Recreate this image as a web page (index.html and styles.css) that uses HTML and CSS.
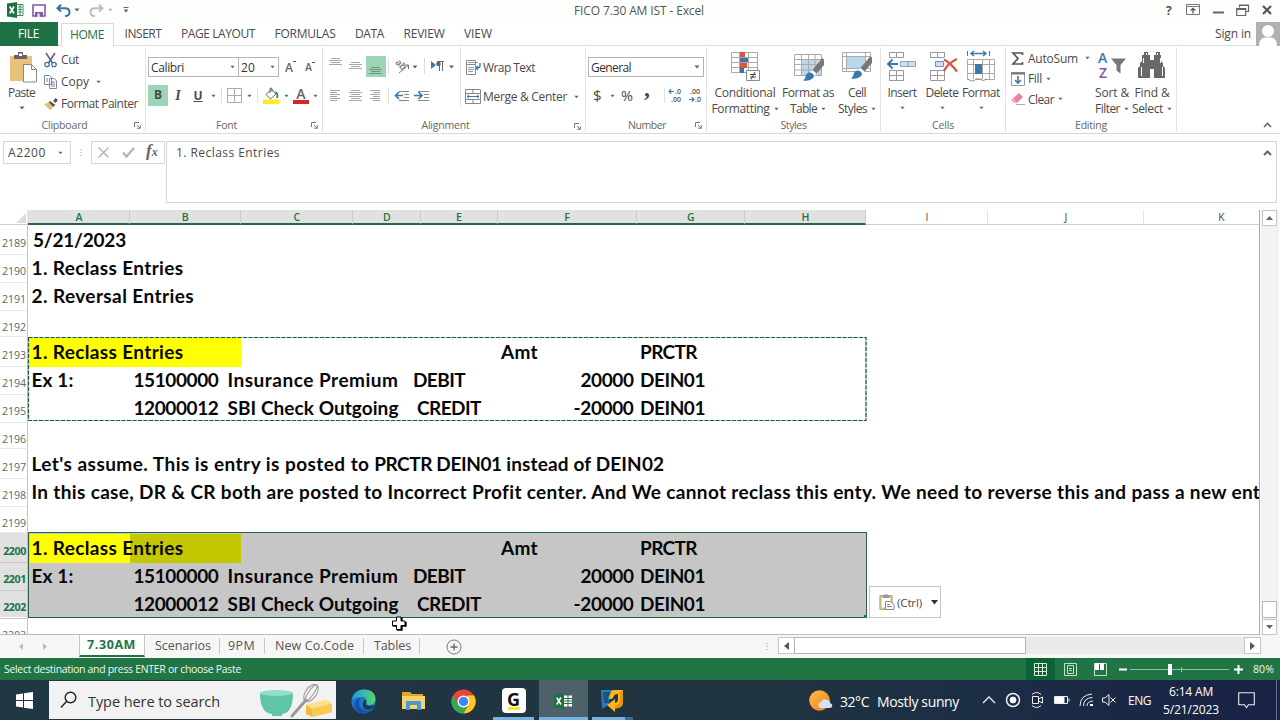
FILE: index.html
```html
<!DOCTYPE html>
<html lang="en">
<head>
<meta charset="utf-8">
<title>FICO 7.30 AM IST - Excel</title>
<link rel="stylesheet" href="styles.css">
</head>
<body>
<svg class="defs" width="0" height="0">
  <defs>
    <symbol id="dd" viewBox="0 0 6 4"><path d="M0.4 0.4h5.2L3 3.4z" fill="#666"/></symbol>
    <symbol id="launch" viewBox="0 0 7 7"><path d="M.5 5V.5H5M3 3l3 3M6.3 3.2v3.1H3.2" fill="none" stroke="#777"/></symbol>
    <symbol id="brush" viewBox="0 0 22 24"><path d="M20.500 0L22 1.500V7L14 16l-4-3.500z" fill="#777"/><path d="M10.500 12l4 3.500-2 2.500-4.500-3.500z" fill="#fff"/><path d="M8 14.500q4 .5 4 4.500-3.500 4.500-11 3.500 2-1 2.500-4 1-4 4.500-4z" fill="#3c78b0"/></symbol>
  </defs>
</svg>
<div class="app">
  <header class="titlebar">
    <svg class="t-logo" width="17" height="16" viewBox="0 0 17 16"><path d="M9 2.500h7v11H9z" fill="#fff" stroke="#3f8a60"/><path d="M11 5h4M11 7.500h4M11 10h4M13 3v10" stroke="#3f8a60"/><path d="M0 1.500L10 0v16L0 14.500z" fill="#1e7145"/><path d="M2.700 4.500l4.300 7M7 4.500l-4.300 7" stroke="#fff" stroke-width="1.600"/></svg>
    <svg class="t-save" width="14" height="13" viewBox="0 0 14 13"><path d="M1 1h12v11H1z" fill="#fff" stroke="#8258a8" stroke-width="1.600"/><path d="M3 8h8v4.500H3z" fill="#8258a8"/><path d="M5.500 9.500h2V13h-2z" fill="#fff"/></svg>
    <svg class="t-undo" width="15" height="13" viewBox="0 0 15 13"><path d="M5 .8L1.500 4.200 5 7.600M1.800 4.200H9q4.500 0 4.500 4Q13.500 12 9 12" fill="none" stroke="#3b6ea8" stroke-width="2"/></svg>
    <svg class="t-dd1" width="6" height="4"><use href="#dd"/></svg>
    <svg class="t-redo" width="15" height="13" viewBox="0 0 15 13"><path d="M10 .8l3.500 3.400L10 7.600M13.200 4.200H6Q1.500 4.200 1.500 8.200 1.500 12 6 12" fill="none" stroke="#bdbdbd" stroke-width="2"/></svg>
    <svg class="t-dd2" width="5" height="4" opacity=".5"><use href="#dd"/></svg>
    <svg class="t-qat" width="6" height="6" viewBox="0 0 6 6"><path d="M.5.500h5" stroke="#666"/><path d="M.5 2.500h5L3 5.500z" fill="#666"/></svg>
    <span class="t-title" data-w="130">FICO 7.30 AM IST - Excel</span>
    <b class="t-help">?</b>
    <svg class="t-rib" width="14" height="11" viewBox="0 0 14 11"><path d="M.5.500h13v10H.5zM.5 2.500h13" fill="none" stroke="#777"/><path d="M7 9.500V4.500M4.700 6.500L7 4.300l2.300 2.200" fill="none" stroke="#555" stroke-width="1.300"/></svg>
    <svg class="t-min" width="11" height="3"><path d="M0 1.500h11" stroke="#666" stroke-width="2"/></svg>
    <svg class="t-res" width="13" height="12" viewBox="0 0 13 12"><path d="M3.500 3.500V1h9v6.500H10M.7 4.500h9v7h-9zM.7 5.500h9M3.500 1.500h9" fill="none" stroke="#666" stroke-width="1.200"/></svg>
    <svg class="t-close" width="10" height="10" viewBox="0 0 10 10"><path d="M1 1l8 8M9 1L1 9" stroke="#555" stroke-width="2.200"/></svg>
  </header>
  <nav class="tabs">
    <span class="file"><span data-w="21">FILE</span></span>
    <span class="home"><span data-w="34">HOME</span></span>
    <span class="tb" data-w="37">INSERT</span><span class="tb" data-w="74">PAGE LAYOUT</span><span class="tb" data-w="61">FORMULAS</span><span class="tb" data-w="29">DATA</span><span class="tb" data-w="41">REVIEW</span><span class="tb" data-w="28">VIEW</span>
    <span class="signin" data-w="36">Sign in</span>
    <svg class="avatar" width="24" height="24" viewBox="0 0 24 24"><path d="M0 0h24v24H0z" fill="#b0b0b0"/><circle cx="12" cy="9" r="6" fill="#fff"/><path d="M3 24q0-8 6-8.500h6q6 .5 6 8.500z" fill="#fff"/></svg>
  </nav>
  <section class="ribbon">
    <div class="group clipboard">
      <div class="gbody">
        <div class="paste">
          <svg width="28" height="31" viewBox="0 0 28 31"><path d="M1 4h22v25H1z" fill="#e8c27a"/><path d="M5 7V3h4V0h5v3h4v4z" fill="#666"/><path d="M10 1.500h3V4h-3z" fill="#fff"/><path d="M14.500 12.500h8l5 5V30h-13z" fill="#fff" stroke="#888"/><path d="M22.500 12.500v5h5" fill="none" stroke="#888"/></svg>
          <span data-w="27">Paste</span>
          <svg class="d" width="6" height="4"><use href="#dd"/></svg>
        </div>
        <div class="clip-list">
          <div><svg width="13" height="15" viewBox="0 0 13 15"><path d="M2 0l6.500 10M11 0L4.500 10" stroke="#666" stroke-width="1.600" fill="none"/><circle cx="3" cy="11.500" r="2.200" fill="none" stroke="#3d78ac" stroke-width="1.300"/><circle cx="10" cy="11.500" r="2.200" fill="none" stroke="#3d78ac" stroke-width="1.300"/></svg><span data-w="18">Cut</span></div>
          <div><svg width="13" height="14" viewBox="0 0 13 14"><path d="M.5.500h5l2 2v7h-7z M5.500 3.500h5l2 2.500v7.500h-7z" fill="#fff" stroke="#888"/><path d="M2 4h2M2 6h2M7 7h4M7 9h4M7 11h4" stroke="#5a88b5"/></svg><span data-w="28">Copy</span><svg class="d" width="5" height="4"><use href="#dd"/></svg></div>
          <div><svg width="13" height="12" viewBox="0 0 13 12"><path d="M9 3l2.500-3L14 2l-2.500 3z" fill="#555"/><path d="M6 3l5.500 4L9 9 4.500 4.500z" fill="#555"/><path d="M4.500 4L9 9q-1 2.500-3 3L0 6q3-.2 4.500-2z" fill="#e4bd75"/></svg><span data-w="77">Format Painter</span></div>
        </div>
      </div>
      <div class="glabel"><span data-w="46">Clipboard</span><svg class="launch" width="7" height="7"><use href="#launch"/></svg></div>
    </div>
    <div class="group font">
      <div class="gbody col">
        <div class="row fr1">
          <div class="combo name"><span data-w="33">Calibri</span><svg class="d" width="5" height="4"><use href="#dd"/></svg></div>
          <div class="combo size"><span data-w="14">20</span><svg class="d" width="5" height="4"><use href="#dd"/></svg></div>
          <span class="grow">A<i></i></span><span class="shrink">A<i></i></span>
        </div>
        <div class="row fr2">
          <b class="bold">B</b><i class="ital">I</i><b class="und">U</b><svg class="d" width="5" height="4"><use href="#dd"/></svg><em></em>
          <svg class="bord" width="15" height="15" viewBox="0 0 15 15"><path d="M.5.500h14v14H.5zM7.500 0v15M0 7.500h15" fill="none" stroke="#aaa"/></svg><svg class="d" width="5" height="4"><use href="#dd"/></svg><em></em>
          <svg class="fill" width="17" height="17" viewBox="0 0 17 17"><path d="M0 12.500h16.500V17H0z" fill="#ffee1a"/><path d="M3 7.500L8.500 2l4.500 5-5.500 5z" fill="#fff" stroke="#666"/><path d="M7 6V1.500q1.500-1.500 2 .5v3" fill="none" stroke="#666"/><path d="M12.500 5q3 2 1.500 6" fill="none" stroke="#3d78ac" stroke-width="1.800"/></svg><svg class="d" width="5" height="4"><use href="#dd"/></svg>
          <span class="fcol">A</span><svg class="d last" width="5" height="4"><use href="#dd"/></svg>
        </div>
      </div>
      <div class="glabel"><span data-w="21">Font</span><svg class="launch" width="7" height="7"><use href="#launch"/></svg></div>
    </div>
    <div class="group align">
      <div class="gbody">
        <svg class="aicons" width="137" height="72" viewBox="0 0 137 72">
          <path d="M43 10h20v21H43z" fill="#9fd5b7"/>
          <path d="M8 12.500h9M6 14.500h13M8 16.500h9M6 18.500h13M28 16.500h9M26 18.500h13M28 20.500h9M26 22.500h13" stroke="#a6a6a6"/>
          <path d="M48 21.500h9M46 23.500h13M48 25.500h9M46 27.500h13" stroke="#6e9882"/>
          <path d="M7 44.500h10M7 46.500h7M7 48.500h10M7 50.500h7M7 52.500h10M7 54.500h7M28 44.500h9M26 46.500h13M28 48.500h9M26 50.500h13M28 52.500h9M26 54.500h13M47 44.500h10M50 46.500h7M47 48.500h10M50 50.500h7M47 52.500h10M50 54.500h7" stroke="#a6a6a6"/>
          <path d="M65.500 12v16M101.500 12v16M65.500 42v16" stroke="#ddd"/>
          <text x="-6" y="3" class="abtxt" transform="translate(78 19) rotate(45)">ab</text>
          <path d="M76 27L85 19.500M81 19h4.500v4" fill="none" stroke="#777"/>
          <path d="M89.500 19.500h5l-2.500 3zM126 19.500h5l-2.500 3z" fill="#666"/>
          <path d="M108 15l5 4-5 4z" fill="#3d78ac"/><path d="M116.500 25v-9.500M119.500 25v-9.500M114 15.500h7" stroke="#666"/><circle cx="115.500" cy="18" r="2.300" fill="#666"/>
          <path d="M72 49.500h8M76 46l-3.500 3.500L76 53" stroke="#3d78ac" stroke-width="1.700" fill="none"/>
          <path d="M76 45.500h10M81 48.500h5M81 51.500h5M76 54.500h10" stroke="#888"/>
          <path d="M91 49.500h8M95.500 46l3.500 3.500-3.500 3.500" stroke="#3d78ac" stroke-width="1.700" fill="none"/>
          <path d="M95 45.500h11M101 48.500h5M101 51.500h5M95 54.500h11" stroke="#888"/>
        </svg>
        <div class="wraps">
          <div><svg width="16" height="15" viewBox="0 0 16 15"><path d="M1.500.500h9v4h-9zM1.500 4.500h9v10h-9z" fill="#fff" stroke="#888"/><path d="M3 2.500h10M3 7.500h6M3 9.500h6M3 11.500h5" stroke="#999"/><path d="M15 3v3q0 2-4 2M13 6l-2 2 2 2" fill="none" stroke="#3d78ac" stroke-width="1.400"/></svg><span data-w="52">Wrap Text</span></div>
          <div><svg width="16" height="15" viewBox="0 0 16 15"><path d="M.5.500h15v14H.5zM.5 4.500h15M.5 10.500h15M8 0v4M8 11v4" fill="none" stroke="#888"/><path d="M2 7.500h12M4 5.800L2 7.500l2 1.700M12 5.800l2 1.700-2 1.700" stroke="#3d78ac" fill="none"/></svg><span data-w="84">Merge &amp; Center</span><svg class="d" width="5" height="4"><use href="#dd"/></svg></div>
        </div>
      </div>
      <div class="glabel"><span data-w="48">Alignment</span><svg class="launch" width="7" height="7"><use href="#launch"/></svg></div>
    </div>
    <div class="group number">
      <div class="gbody col">
        <div class="combo general"><span data-w="40">General</span><svg class="d" width="6" height="4"><use href="#dd"/></svg></div>
        <div class="row nr2"><span class="dol">$</span><svg class="d" width="5" height="4"><use href="#dd"/></svg><span class="pct">%</span><b class="com">,</b><em></em>
          <svg width="35" height="15" viewBox="0 0 35 15"><g class="dec"><text x="6" y="6">.0</text><text x="2" y="14">.00</text><text x="21" y="6">.00</text><text x="26" y="14">.0</text></g><path d="M0 3.500h5M2.200 1.200L0 3.500l2.200 2.200M20 11.500h5M22.800 9.200l2.200 2.300-2.200 2.200" fill="none" stroke="#3d78ac" stroke-width="1.200"/></svg></div>
      </div>
      <div class="glabel"><span data-w="38">Number</span><svg class="launch" width="7" height="7"><use href="#launch"/></svg></div>
    </div>
    <div class="group styles">
      <div class="gbody">
        <div class="big cf"><svg width="31" height="31" viewBox="0 0 31 31"><path d="M1.500 1.500h26v20h-26zM1.500 6.500h26M1.500 11.500h26M1.500 16.500h26M9.500 1v21M18.500 1v21" fill="#fff" stroke="#aaa"/><path d="M10 1h5v5h-5zM10 12h7v5h-7z" fill="#d3583f"/><path d="M10 7h8v4h-8zM10 17h4v5h-4z" fill="#4272a8"/><path d="M16.500 19.500h13v10h-13z" fill="#fff" stroke="#888"/><path d="M20 23.500h6M20 26h6M25 21l-4 7.500" stroke="#444"/></svg><span data-w="61">Conditional</span><span class="l2"><span data-w="58">Formatting</span><svg class="d" width="5" height="4"><use href="#dd"/></svg></span></div>
        <div class="big ft"><svg width="31" height="31" viewBox="0 0 31 31"><path d="M1.500 3.500h27v21h-27z" fill="#fff"/><path d="M9 9h20v16H9z" fill="#bcd6ea"/><path d="M1.500 3.500h27v21h-27zM1.500 8.500h27M1.500 13.500h27M1.500 19h27M8.500 3v22M15.500 3v22M22 3v22" fill="none" stroke="#aaa"/><use href="#brush" x="9" y="7" width="22" height="24"/></svg><span data-w="52">Format as</span><span class="l2"><span data-w="27">Table</span><svg class="d" width="5" height="4"><use href="#dd"/></svg></span></div>
        <div class="big cs"><svg width="31" height="31" viewBox="0 0 31 31"><path d="M1.500 1.500h28v19h-28z" fill="#fff"/><path d="M6 6h18v12H6z" fill="#bcd6ea"/><path d="M1.500 1.500h28v19h-28zM1.500 5.500h28M1.500 17.500h28M5.500 1v20M24.500 1v20" fill="none" stroke="#aaa"/><use href="#brush" x="9" y="5" width="22" height="24"/></svg><span data-w="18">Cell</span><span class="l2"><span data-w="29">Styles</span><svg class="d" width="5" height="4"><use href="#dd"/></svg></span></div>
      </div>
      <div class="glabel"><span data-w="26">Styles</span></div>
    </div>
    <div class="group cells">
      <div class="gbody">
        <div class="big ci"><svg width="31" height="31" viewBox="0 0 31 31"><path d="M3.500 1.500h14v5h-14zM10.500 1.500v5M3.500 19.500h14v10h-14zM10.500 19.500v10M3.500 24.500h14" fill="#fff" stroke="#999"/><path d="M14.500 10.500h15v5h-15zM22 10.500v5" fill="#cfdfec" stroke="#8ea4b8"/><path d="M2 13h10M6.500 8.500L2 13l4.500 4.500" stroke="#3d78ac" stroke-width="2" fill="none"/></svg><span data-w="29">Insert</span><svg class="d" width="5" height="4"><use href="#dd"/></svg></div>
        <div class="big cd"><svg width="31" height="31" viewBox="0 0 31 31"><path d="M3.500 1.500h14v5h-14zM10.500 1.500v5M3.500 19.500h14v10h-14zM10.500 19.500v10M3.500 24.500h14" fill="#fff" stroke="#999"/><path d="M8.500 10.500h8v5h-8z" fill="#cfdfec" stroke="#6f95bd"/><path d="M17 8.500q6 3 13 12M30 8q-9 4-13 12" stroke="#d3583f" stroke-width="2.300" fill="none"/></svg><span data-w="33">Delete</span><svg class="d" width="5" height="4"><use href="#dd"/></svg></div>
        <div class="big cfm"><svg width="31" height="31" viewBox="0 0 31 31"><path d="M3.500 0v5M25.500 0v5" stroke="#3d78ac"/><path d="M7 2.500h15M10 0L7 2.500 10 5M19 0l3 2.500L19 5" stroke="#3d78ac" stroke-width="1.500" fill="none"/><path d="M3.500 8.500h27v20h-27zM3.500 13.500h27M3.500 22.500h27M9.500 8v20M18.500 8v20M25.500 8v20" fill="#fff" stroke="#aaa"/><path d="M11 13h7v10h-7z" fill="#3d78ac"/><path d="M4 28q5 4 8 0h4q3 3 7 0" stroke="#888" fill="#fff"/></svg><span data-w="38">Format</span><svg class="d" width="5" height="4"><use href="#dd"/></svg></div>
      </div>
      <div class="glabel"><span data-w="22">Cells</span></div>
    </div>
    <div class="group editing">
      <div class="gbody">
        <div class="elist">
          <div><svg width="13" height="13" viewBox="0 0 13 13"><path d="M11.500 3V1H2l5 5.500L2 12h9.500v-2" fill="none" stroke="#555" stroke-width="1.700"/></svg><span data-w="50">AutoSum</span><svg class="d far" width="5" height="4"><use href="#dd"/></svg></div>
          <div><svg width="14" height="14" viewBox="0 0 14 14"><path d="M.5.500h13v13H.5z" fill="#fff" stroke="#999"/><path d="M0 1.500h14" stroke="#777" stroke-width="2"/><path d="M7 4v7M4 8l3 3 3-3" fill="none" stroke="#3d78ac" stroke-width="1.600"/></svg><span data-w="14">Fill</span><svg class="d" width="5" height="4"><use href="#dd"/></svg></div>
          <div><svg width="14" height="14" viewBox="0 0 14 14"><path d="M8 1l4 4-6 6H3L0 8z" fill="#e5849b"/><path d="M0 8l2-2 4 5H3z" fill="#f3b9c6"/><path d="M5 12.500h9" stroke="#aaa"/></svg><span data-w="26">Clear</span><svg class="d" width="5" height="4"><use href="#dd"/></svg></div>
        </div>
        <div class="big sf"><svg width="31" height="31" viewBox="0 0 31 31"><text class="az" x="1" y="12" fill="#3d78ac">A</text><text class="az" x="2" y="26.500" fill="#8258a8">Z</text><path d="M14 7.500h15L23.500 14v8.500l-4-3V14z" fill="#777"/></svg><span data-w="34">Sort &amp;</span><span class="l2"><span data-w="25">Filter</span><svg class="d" width="5" height="4"><use href="#dd"/></svg></span></div>
        <div class="big fs"><svg width="31" height="31" viewBox="0 0 31 31"><path d="M7 1h4v3h2v5h4V4h2V1h4v3h1v6l2 2v3l2 2v10H17v-9h-4v9H1V17l2-2v-3l2-2V4h2z" fill="#686868"/><path d="M4.500 16v9M25.500 16v9M6.500 7v5M23.500 7v5M9.500 2v2M20.500 2v2" stroke="#fff"/></svg><span data-w="35">Find &amp;</span><span class="l2"><span data-w="31">Select</span><svg class="d" width="5" height="4"><use href="#dd"/></svg></span></div>
      </div>
      <div class="glabel"><span data-w="32">Editing</span></div>
    </div>
    <svg class="collapse" width="9" height="6" viewBox="0 0 9 6"><path d="M1 5l3.500-3.500L8 5" fill="none" stroke="#666" stroke-width="1.600"/></svg>
  </section>
  <section class="fbar">
    <div class="namebox"><span data-w="38">A2200</span><svg class="d" width="5" height="4"><use href="#dd"/></svg></div>
    <svg class="dots" width="2" height="8" viewBox="0 0 2 8"><path d="M1 0v8" stroke="#999" stroke-dasharray="1 2"/></svg>
    <div class="fxbox"><svg width="11" height="11" viewBox="0 0 11 11"><path d="M.5.500l10 10M10.500.500l-10 10" stroke="#b5b5b5" stroke-width="1.500"/></svg><svg width="13" height="11" viewBox="0 0 13 11"><path d="M1 5.500L4.500 9.500 12 1" stroke="#b5b5b5" stroke-width="2.300" fill="none"/></svg><i>f<small>x</small></i></div>
    <div class="formula"><span data-w="104">1. Reclass Entries</span><svg width="9" height="6" viewBox="0 0 9 6"><path d="M1 5l3.500-3.500L8 5" fill="none" stroke="#666" stroke-width="2"/></svg></div>
  </section>
  <section class="sheet">
    <div class="main">
      <div class="cols">
        <span class="corner"><svg width="10" height="10"><path d="M10 0v10H0z" fill="#dcdcdc"/></svg></span>
        <b>A</b><b>B</b><b>C</b><b>D</b><b>E</b><b>F</b><b>G</b><b>H</b><span>I</span><span>J</span><span>K</span>
      </div>
      <div class="r"><u>2189</u><p class="date"><span data-w="93">5/21/2023</span></p></div>
      <div class="r"><u>2190</u><p><span data-w="152">1. Reclass Entries</span></p></div>
      <div class="r"><u>2191</u><p><span data-w="162.500">2. Reversal Entries</span></p></div>
      <div class="r"><u>2192</u></div>
      <div class="block copied">
        <div class="r"><u>2193</u><p class="y"><span data-w="152">1. Reclass Entries</span></p><p class="y"></p><p></p><p></p><p></p><p><span data-w="37">Amt</span></p><p><span data-w="57">PRCTR</span></p></div>
        <div class="r"><u>2194</u><p><span data-w="42">Ex 1:</span></p><p><span data-w="85">15100000</span></p><p class="c"><span data-w="171">Insurance Premium</span></p><p class="dd"><span data-w="52">DEBIT</span></p><p></p><p class="n"><span data-w="53">20000</span></p><p><span data-w="65">DEIN01</span></p></div>
        <div class="r"><u>2195</u><p></p><p><span data-w="85">12000012</span></p><p class="c"><span data-w="171">SBI Check Outgoing</span></p><p class="dc"><span data-w="64">CREDIT</span></p><p></p><p class="n"><span data-w="60">-20000</span></p><p><span data-w="65">DEIN01</span></p></div>
        <svg class="ants" width="839" height="85"><rect x=".5" y=".5" width="837.500" height="83" fill="none" stroke="#b9dbc6" stroke-width="1.200"/><rect x=".5" y=".5" width="837.500" height="83" fill="none" stroke="#24583c" stroke-width="1.200" stroke-dasharray="4 1.500"/></svg>
      </div>
      <div class="r"><u>2196</u></div>
      <div class="r"><u>2197</u><p><span data-w="338">Let's assume. This is entry is posted to</span> <span data-w="127.500">PRCTR DEIN01</span> <span data-w="158">instead of DEIN02</span></p></div>
      <div class="r"><u>2198</u><p><span data-w="1236">In this case, DR &amp; CR both are posted to Incorrect Profit center. And We cannot reclass this enty. We need to reverse this and pass a new entr</span></p></div>
      <div class="r"><u>2199</u></div>
      <div class="block sel">
        <div class="r"><u>2200</u><p class="y"><span data-w="152">1. Reclass Entries</span></p><p class="y2"></p><p></p><p></p><p></p><p><span data-w="37">Amt</span></p><p><span data-w="57">PRCTR</span></p><p></p></div>
        <div class="r"><u>2201</u><p><span data-w="42">Ex 1:</span></p><p><span data-w="85">15100000</span></p><p class="c"><span data-w="171">Insurance Premium</span></p><p class="dd"><span data-w="52">DEBIT</span></p><p></p><p class="n"><span data-w="53">20000</span></p><p><span data-w="65">DEIN01</span></p><p></p></div>
        <div class="r"><u>2202</u><p></p><p><span data-w="85">12000012</span></p><p class="c"><span data-w="171">SBI Check Outgoing</span></p><p class="dc"><span data-w="64">CREDIT</span></p><p></p><p class="n"><span data-w="60">-20000</span></p><p><span data-w="65">DEIN01</span></p><p></p></div>
        <div class="outline"><i></i></div>
        <div class="pastebtn"><svg width="16" height="16" viewBox="0 0 16 16"><path d="M1.500 2.500h11v12h-11z" fill="#fff" stroke="#d5cd58" stroke-width="2"/><path d="M1 1.500h12v14H1z" fill="none" stroke="#aaa"/><path d="M3.500 4V2H5V.500h4V2h1.500v2z" fill="#999"/><path d="M6.500 7.500h5l3.500 3v5H6.500z" fill="#fff" stroke="#888"/><path d="M8 10.500h3M8 12.500h5" stroke="#888"/></svg><span data-w="25">(Ctrl)</span><svg width="7" height="5"><path d="M0 0h7L3.500 4.500z" fill="#333"/></svg></div>
      </div>
      <div class="r last"><u>2203</u></div>
      <svg class="cursor" width="16" height="15" viewBox="0 0 16 15"><path d="M6 2h6v4h4v5h-4v4H6v-4H2V6h4z" fill="#000" transform="translate(-.3 -.3)"/><path d="M5.500 1h4.500v4h4v4.500h-4v4H5.500v-4h-4V5h4z" fill="#fff" stroke="#000"/></svg>
    </div>
    <div class="vscroll"><span class="sb"><svg width="7" height="4"><path d="M0 4h7L3.500 0z" fill="#666"/></svg></span><span class="vthumb"></span><span class="sb"><svg width="7" height="4"><path d="M0 0h7L3.500 4z" fill="#666"/></svg></span></div>
  </section>
  <div class="sheettabs">
    <svg class="nav" width="28" height="7"><path d="M4 0v7L0 3.500zM24 0v7l4-3.500z" fill="#bbb"/></svg>
    <span class="st on"><b data-w="49">7.30AM</b></span><span class="st s1"><span data-w="56">Scenarios</span></span><span class="st s2"><span data-w="27">9PM</span></span><span class="st s3"><span data-w="79">New Co.Code</span></span><span class="st s4"><span data-w="37">Tables</span></span>
    <svg class="plus" width="16" height="16" viewBox="0 0 16 16"><circle cx="8" cy="8" r="7" fill="none" stroke="#777"/><path d="M8 4.500v7M4.500 8h7" stroke="#666" stroke-width="1.300"/></svg>
    <svg class="dots2" width="2" height="8" viewBox="0 0 2 8"><path d="M1 0v8" stroke="#999" stroke-dasharray="1 2"/></svg>
    <div class="hscroll"><span class="sb"><svg width="5" height="8"><path d="M5 0v8L0 4z" fill="#555"/></svg></span><span class="hthumb"></span><span class="sb r2"><svg width="5" height="8"><path d="M0 0v8l5-4z" fill="#555"/></svg></span></div>
  </div>
  <div class="status">
    <span class="smsg" data-w="237">Select destination and press ENTER or choose Paste</span>
    <span class="vgrid"><svg width="13" height="13" viewBox="0 0 13 13"><path d="M.5.500h12v12H.5zM4.500 0v13M8.500 0v13M0 4.500h13M0 8.500h13" fill="none" stroke="#d6eadd"/></svg></span>
    <svg class="vpage" width="13" height="13" viewBox="0 0 13 13"><path d="M.5.500h12v12H.5zM3.500 2.500h6v8h-6zM5 5.500h3M5 7.500h3" fill="none" stroke="#c4dfce"/></svg>
    <svg class="vbreak" width="13" height="13" viewBox="0 0 13 13"><path d="M.5.500h12v12H.5z" fill="none" stroke="#c4dfce"/><path d="M1 0h4v7H1zM6 0h4v7H6z" fill="#fff"/></svg>
    <svg class="zoom" width="124" height="11" viewBox="0 0 124 11"><path d="M0 5.500h8M115 5.500h9M119.500 1v9" stroke="#fff" stroke-width="2"/><path d="M11 5.500h99M62.500 3v5" stroke="#8fc3a5"/><path d="M49 0h4v11h-4z" fill="#fff"/></svg>
    <span class="zp" data-w="21">80%</span>
  </div>
  <footer class="taskbar">
    <svg class="win" width="17" height="17" viewBox="0 0 17 17"><path d="M0 2.500L7 1.500V8H0zM8 1.300L17 0v8H8zM0 9h7v6.500L0 14.500zM8 9h9v8l-9-1.300z" fill="#fff"/></svg>
    <div class="search">
      <svg class="mag" width="17" height="18" viewBox="0 0 17 18"><circle cx="10.500" cy="6.500" r="5.300" fill="none" stroke="#222" stroke-width="1.400"/><path d="M6.700 10.300L1 16.500" stroke="#222" stroke-width="1.400"/></svg>
      <span data-w="132">Type here to search</span>
      <svg class="food" width="74" height="36" viewBox="0 0 74 36"><path d="M1 10q0 20 12 21v2h10v-2q11-1 11-21z" fill="#5fc4a8"/><ellipse cx="17.500" cy="10" rx="16.500" ry="3" fill="#8de0c8"/><path d="M33 33L47 17" stroke="#9a9a9a" stroke-width="3" stroke-linecap="round"/><g fill="none" stroke="#999"><ellipse cx="52" cy="10" rx="5.500" ry="10" transform="rotate(35 52 10)"/><ellipse cx="52" cy="10" rx="2.500" ry="10" transform="rotate(35 52 10)"/></g><path d="M47 22l20-5 6 4v8l-20 5-6-3z" fill="#f2bb3d"/><path d="M47 22l20-5 6 4-20 5z" fill="#ffe08a"/><path d="M53 26l20-5v8l-20 5z" fill="#f7ca55"/></svg>
    </div>
    <svg class="edge" width="25" height="25" viewBox="0 0 25 25"><defs><linearGradient id="e1" x1="0" x2="1"><stop offset="0" stop-color="#1b9de2"/><stop offset="1" stop-color="#58d46a"/></linearGradient></defs><circle cx="12.500" cy="12.500" r="12" fill="#1b78ce"/><path d="M.6 11Q3 .5 12.500.500 24 .5 24.500 10q.5 5-5.500 6-5 0-4-3 1-5-4-5Q3 8 .6 11z" fill="url(#e1)"/><path d="M10 9q-4 5 0 10 4 4 11 2-5 5-12 3Q1 20 4 13q2-4 6-4z" fill="#1454a5"/><path d="M14.500 10.500q2 2 .3 5 3 2.500 9 .5-1.500 4-5 4.500-7 1-7-5 .3-4 2.700-5z" fill="#203744"/></svg>
    <svg class="folder" width="23" height="20" viewBox="0 0 23 20"><path d="M0 1h8l2 2h11v5H0z" fill="#e2a52f"/><path d="M0 5h23v13H0z" fill="#fbd267"/><path d="M4 10h15v9h-4v-5H8v5H4z" fill="#4a9bd4"/></svg>
    <svg class="chrome" width="25" height="25" viewBox="0 0 25 25"><circle cx="12.500" cy="12.500" r="12" fill="#e6453a"/><path d="M2.100 6.500A12 12 0 0 0 12.500 24.500L18 15.500H7.300z" fill="#35a854"/><path d="M23 6.500A12 12 0 0 1 12.500 24.500l5.300-9-2-9z" fill="#fbc91f"/><circle cx="12.500" cy="12.500" r="6" fill="#fff"/><circle cx="12.500" cy="12.500" r="4.700" fill="#4285f4"/></svg>
    <span class="gapp"><b>G</b></span>
    <span class="xapp"><svg width="19" height="16" viewBox="0 0 19 16"><path d="M10 2.500h8v11h-8z" fill="#fff"/><path d="M10 5.500h8M10 8h8M10 10.500h8M14 2v12" stroke="#1e7145"/><path d="M0 1.500L10 0v16L0 14.500z" fill="#1e7145"/><path d="M2.700 4.500l4.300 7M7 4.500l-4.300 7" stroke="#fff" stroke-width="1.500"/></svg></span>
    <span class="sapp"><svg width="23" height="23" viewBox="0 0 23 23"><path d="M0 1h15L9 7l-2 9-6 4z" fill="#2d7bbd"/><path d="M2 3h8L7 8v6H3z" fill="#1b4f86"/><path d="M9 5q1-4 5-4h8v12q0 6-8 6.500V23l-8-7 8-6v4q3-.5 3-4V5l-3 .5-3 4.500H8z" fill="#f9b61d"/><path d="M17 5l5-4v12q0 6-8 6.500V17q5-1 5-6V5z" fill="#e8920e"/></svg></span>
    <svg class="sun" width="24" height="22" viewBox="0 0 24 22"><defs><linearGradient id="sg" y2="1"><stop offset="0" stop-color="#ffc04a"/><stop offset="1" stop-color="#ef7b18"/></linearGradient></defs><circle cx="10.500" cy="10.500" r="10.300" fill="url(#sg)"/><path d="M10 17q-2-4 2-5 2-4 6-2 3 0 3 3 3 1 2 4-1 1-3 1h-7q-2 0-3-1z" fill="#d4e2f7"/></svg>
    <span class="tt temp" data-w="29">32°C</span><span class="tt wx" data-w="82">Mostly sunny</span>
    <svg class="tray" width="134" height="18" viewBox="0 0 134 18"><g fill="none" stroke="#eee"><path d="M1 12l6-6 6 6" stroke-width="1.300"/><circle cx="31" cy="9" r="6.500" stroke-width="1.500"/><circle cx="31" cy="9" r="3" fill="#fff"/><path d="M50.500 5.500h6v7h-6zM56.500 8l4-2v6l-4-2M50 3.500q4.500-4 9 0M50 14.500q4.500 4 9 0"/><path d="M72.500 5.500h13v7h-13zM87 7.500v3"/><path d="M73 6h9v6h-9z" fill="#fff"/><path d="M98 15q0-11 12-12M101.500 15q0-8 9-8.500M105 15q0-4.500 6-5"/><path d="M120.500 7h2.500l4-3.500v11L123 11h-2.500zM128.500 6.500l5 5M133.500 6.500l-5 5"/></g><path d="M108 13h3v2h-3z" fill="#fff"/></svg>
    <span class="ts eng" data-w="23">ENG</span>
    <div class="clock"><span data-w="44">6:14 AM</span><span data-w="56">5/21/2023</span></div>
    <svg class="note" width="17" height="17" viewBox="0 0 17 17"><path d="M.7.700h15.600v12H10.500L8.500 15.500 6.500 12.700H.7z" fill="none" stroke="#eee" stroke-width="1.100"/></svg>
    <i class="edgeline"></i>
  </footer>
</div>
<script src="fit.js"></script>
</body>
</html>
```
FILE: fit.js
```js
// Spread or tighten each label so it fills the width given in data-w.
document.querySelectorAll('[data-w]').forEach(function (el) {
  el.style.display = 'inline-block';
  el.style.whiteSpace = 'nowrap';
  el.style.flex = 'none';
  var target = parseFloat(el.dataset.w);
  var natural = el.getBoundingClientRect().width;
  el.style.letterSpacing = ((target - natural) / el.textContent.length).toFixed(3) + 'px';
  el.style.width = target + 'px';
});
```
FILE: styles.css
```css
* { box-sizing: border-box; margin: 0; padding: 0; }
body { width: 1280px; height: 720px; overflow: hidden; background: #fff; font: 12px "Open Sans", "Noto Sans", sans-serif; color: #4a4a4a; }
svg { display: block; flex: none; overflow: visible; }
.defs { position: absolute; }
.app { display: flex; flex-direction: column; width: 1280px; height: 720px; }
p, u, b, span { white-space: nowrap; }

.titlebar { height: 22px; flex: none; display: flex; align-items: center; background: #fcfffb; color: #555; }
.t-logo { margin-left: 7px; margin-top: -2px; }
.t-save { margin-left: 8px; margin-top: -2px; }
.t-undo { margin-left: 10px; margin-top: -2px; }
.t-dd1 { margin-left: 3px; margin-top: -2px; }
.t-redo { margin-left: 9px; margin-top: -2px; }
.t-dd2 { margin-left: 4px; margin-top: -2px; }
.t-qat { margin-left: 10px; margin-top: -2px; }
.t-title { margin-left: 445px; margin-top: -1px; }
.t-help { margin-left: 462px; margin-top: -2px; font-size: 12px; width: 8px; }
.t-rib { margin-left: 12px; margin-top: -3px; }
.t-min { margin-left: 13px; margin-top: 3px; }
.t-res { margin-left: 12px; margin-top: -2px; }
.t-close { margin-left: 13px; margin-top: -2px; }

.tabs { height: 24px; flex: none; display: flex; align-items: center; border-bottom: 1px solid #dededb; }
.file { width: 58px; height: 24px; background: #1e7145; color: #fff; display: flex; align-items: center; padding-left: 18px; margin-right: 3px; }
.home { width: 53px; height: 24px; border: 1px solid #d8d8d5; border-bottom: 0; background: #fff; color: #217346; display: flex; align-items: center; padding: 0 0 2px 8px; margin-right: -9px; position: relative; top: 1px; }
.tabs .tb { margin-left: 19.500px; }
.signin { margin-left: auto; margin-right: 5px; }

.ribbon { height: 88px; flex: none; display: flex; border-bottom: 1px solid #d8d8d8; }
.group { flex: none; display: flex; flex-direction: column; border-right: 1px solid #e4e4e4; height: 85px; margin-top: 1px; }
.gbody { height: 71px; display: flex; }
.gbody.col { flex-direction: column; }
.glabel { height: 15px; display: flex; align-items: center; justify-content: center; position: relative; font-size: 10.500px; color: #666; }
.launch { position: absolute; right: 4px; top: 5px; }
.clipboard { width: 146px; } .clipboard .glabel { padding-right: 16px; }
.font { width: 177px; } .font .glabel { padding-right: 15px; }
.align { width: 263px; } .align .glabel { padding-right: 17px; }
.number { width: 121px; } .number .glabel { padding-left: 18px; padding-right: 16px; }
.number .launch { right: 4px; }
.styles { width: 174px; } .cells { width: 125px; } .editing { width: 171px; }

.paste { width: 43px; display: flex; flex-direction: column; align-items: center; padding-top: 5px; }
.paste svg:first-child { margin-left: 3px; }
.paste > span { margin-top: 2px; height: 15px; line-height: 15px; }
.paste .d { margin-top: 6px; }
.clip-list { padding-top: 2px; margin-left: 1px; }
.clip-list div { height: 22px; display: flex; align-items: center; }
.clip-list span { margin: -1px 0 0 4px; }
.clip-list .d { margin-left: 7px; }

.row { display: flex; align-items: center; }
.combo { display: flex; align-items: center; height: 20px; border: 1px solid #b5b5b5; padding: 0 2px; justify-content: space-between; color: #333; background: #fff; }
.fr1 { margin: 10px 0 0 2px; }
.combo.name { width: 91px; padding-right: 3px; }
.combo.size { width: 41px; margin-left: -1px; padding-right: 3px; }
.grow, .shrink { position: relative; font-size: 12px; font-weight: 600; color: #666; margin-left: 6px; }
.shrink { font-size: 10.500px; margin-left: 12px; }
.grow i, .shrink i { position: absolute; right: -3px; top: 2px; width: 3px; height: 1px; background: #555; }
.fr2 { margin: 8px 0 0 2px; height: 21px; }
.fr2 em { width: 1px; height: 15px; background: #ddd; }
.bold { width: 20px; height: 21px; background: #9fd5b7; text-align: center; line-height: 20px; }
.ital { font: italic bold 14px "Liberation Serif", serif; width: 20px; text-align: center; }
.und { width: 20px; text-align: center; text-decoration: underline; }
.fr2 .und + .d { margin: 0 5px 0 3px; }
.bord { margin-left: 5px; }
.bord + .d { margin: 0 5px 0 5px; }
.fill { margin-left: 5px; }
.fill + .d { margin-left: 4px; }
.fcol { margin-left: 4px; width: 16px; height: 17px; border-bottom: 4px solid #d8262c; text-align: center; line-height: 13px; font-size: 14px; font-weight: 600; color: #666; }
.d.last { margin-left: 4px; }

.abtxt { font: 600 9.500px "Open Sans", sans-serif; fill: #777; }
.aicons { margin-top: -1px; }
.wraps { border-left: 1px solid #e0e0e0; height: 60px; padding: 6px 0 0 4px; }
.wraps div { height: 29px; display: flex; align-items: center; }
.wraps span { margin-left: 2px; }
.wraps .d { margin-left: 7px; }

.general { width: 116px; margin: 10px 0 0 2px; padding-right: 3px; }
.nr2 { margin-top: 8px; height: 20px; }
.dol { font-size: 15px; margin-left: 7px; width: 9px; }
.nr2 .d { margin: 2px 6px 0 8px; }
.pct { font-size: 14.500px; width: 14px; letter-spacing: -.5px; }
.com { font: bold 24px "Liberation Serif", serif; width: 7px; margin: -13px 13px 0 9px; }
.nr2 em { width: 1px; height: 15px; background: #e0e0e0; margin-right: 4px; }
.dec text { font: 600 7px "Open Sans", sans-serif; fill: #555; }

.big { display: flex; flex-direction: column; align-items: center; padding-top: 4px; }
.big > span { height: 16px; line-height: 16px; }
.big > svg:first-child { margin-bottom: 3px; }
.big > .d { margin-top: 5px; }
.big .l2 { display: flex; align-items: center; justify-content: center; }
.l2 .d { margin-left: 4px; }
.cf { width: 68px; margin-left: 4px; } .ft { width: 56px; margin-left: 1px; } .cs { width: 40px; margin-left: 1px; }
.cs > svg:first-child { margin-left: -1px; }
.ft > svg:first-child { margin-left: 1px; }
.cf > svg:first-child { margin-left: 1px; }
.ci { width: 34px; margin-left: 4px; } .cd { width: 38px; margin-left: 4px; } .cfm { width: 40px; margin-left: 0; }
.ci > svg:first-child { margin-left: -1px; }
.cfm > svg:first-child { margin-left: -3px; }
.elist { width: 82px; padding-top: 1px; margin-left: 5px; }
.elist div { height: 20.500px; display: flex; align-items: center; }
.elist span { margin-left: 3px; }
.elist div:first-child span { margin-left: 4px; }
.elist .d { margin-left: 4px; } .elist .d.far { margin-left: 7px; }
.sf { width: 40px; margin-left: -1px; } .fs { width: 42px; margin-left: -1px; }
.az { font: 600 14px "Open Sans", sans-serif; }
.collapse { margin: 76px 8px 0 auto; }

.fbar { height: 76px; flex: none; display: flex; padding-top: 7px; }
.namebox { width: 68px; height: 23px; margin-left: 3px; border: 1px solid #d6d6d6; display: flex; align-items: center; justify-content: space-between; padding: 0 7px 0 4px; }
.dots { margin: 8px 9px 0 9px; }
.fxbox { width: 74px; height: 23px; border: 1px solid #d6d6d6; display: flex; align-items: center; gap: 13px; padding-left: 6px; }
.fxbox i { font: italic bold 17px "Liberation Serif", serif; margin-left: -2px; margin-top: -3px; color: #666; }
.fxbox small { font-size: 12px; }
.formula { width: 1111px; height: 62px; margin-left: 1px; border: 1px solid #d6d6d6; display: flex; justify-content: space-between; padding: 2px 4px 0 9px; }
.formula svg { margin-top: 6px; }

.sheet { height: 425px; flex: none; display: flex; overflow: hidden; }
.main { width: 1260px; overflow: hidden; position: relative; border-right: 1px solid #aaa; border-bottom: 1px solid #bbb; }
.cols, .r { display: grid; grid-template-columns: 28px 102px 110.500px 112.500px 67.500px 77px 139px 108.500px 121px 122px 156px 155px; }
.cols { height: 15px; }
.cols > * { text-align: center; height: 15px; font-size: 10.500px; line-height: 14px; border-right: 1px solid #e4e4e4; border-bottom: 1px solid #ccc; padding-left: 1px; }
.cols b { background: #e0e1e0; color: #217346; border-right-color: #cbcbcb; border-bottom: 2px solid #24684a; font-weight: 600; }
.corner svg { margin: 3px 0 0 15px; }
.r { height: 28px; font: bold 19px Lato, "Noto Sans", sans-serif; color: #080808; }
.r u { text-decoration: none; font: 10.700px "Open Sans", sans-serif; color: #666; text-align: right; padding: 10px 1px 0 0; line-height: 17px; border-right: 1px solid #c4c4c4; border-bottom: 1px solid #e9e9e9; letter-spacing: -.1px; }
.r p { line-height: 30px; padding-left: 3.500px; min-width: 0; }
.r p.date { padding-left: 5px; }
.r p.y { background: #ff0; } .r p.y2 { background: #c4c800; }
.r p.y > span { position: relative; z-index: 2; }
.r p.c { padding-left: 0; margin-left: -13px; }
.r p.dd { padding-left: 60px; } .r p.dc { padding-left: 64px; }
.r p.n { text-align: right; padding-right: 3px; }
.block { position: relative; }
.ants { position: absolute; left: 28px; top: 0; }
.sel .r { background: linear-gradient(90deg, #e1e1e1 28px, #c6c6c6 28px, #c6c6c6 866px, transparent 866px); }
.sel .r u { font-weight: bold; color: #217346; border-bottom-color: #c8c8c8; letter-spacing: -.4px; }
.outline { position: absolute; left: 28px; top: -1px; width: 839px; height: 86px; border: 1px solid #2b6045; box-shadow: inset 0 0 0 1px #b5d3c3; z-index: 3; }
.outline i { position: absolute; right: -1px; bottom: -1px; width: 3px; height: 3px; background: #217346; border: 0; }
.pastebtn { position: absolute; left: 869px; top: 53px; width: 72px; height: 32px; border: 1px solid #c4c4c4; background: #fff; display: flex; align-items: center; padding-left: 9px; }
.pastebtn span { margin: 0 9px 0 2px; font-size: 11.500px; font-weight: 400; font-family: "Open Sans", sans-serif; }
.cursor { position: absolute; left: 391px; top: 406px; z-index: 4; }
.vscroll { width: 18px; margin-left: 1px; padding: 0 2px 0 1px; display: flex; flex-direction: column; background: #f2f2f2; }
.sb { background: #fff; border: 1px solid #c6c6c6; display: flex; align-items: center; justify-content: center; }
.vscroll .sb { height: 16px; flex: none; }
.vthumb { height: 17px; flex: none; margin: auto 0 1px; background: #fff; border: 1px solid #b5b5b5; }

.sheettabs { height: 23px; flex: none; display: flex; align-items: center; background: #f6f6f6; font-size: 12.500px; color: #555; }
.nav { margin: 0 32px 0 19px; }
.st { height: 16px; line-height: 15px; border-right: 1px solid #c6c6c6; display: flex; align-items: center; padding: 0 10px; flex: none; margin-top: -2px; }
.st.on { height: 22px; width: 66px; margin-top: 0; margin-bottom: 2px; background: #fff; border: 1px solid #c6c6c6; border-top: 0; border-bottom: 2px solid #217346; color: #217346; padding: 0 7px; }
.s1 { width: 75px; } .s2 { width: 45px; padding: 0 8px; } .s3 { width: 99px; } .s4 { width: 56px; }
.plus { margin-left: 26px; }
.dots2 { margin-left: 304px; }
.hscroll { margin-left: 10px; display: flex; width: 483px; height: 17px; background: #eaeaea; margin-top: -2px; }
.hscroll .sb { width: 17px; }
.hthumb { width: 232px; background: #fff; border: 1px solid #b5b5b5; margin-left: -1px; }
.r2 { margin-left: auto; }

.status { height: 22px; flex: none; background: #217545; color: #eef8f1; display: flex; align-items: center; font-size: 10.500px; }
.smsg { margin-left: 4px; }
.vgrid { margin-left: 785px; width: 29px; height: 22px; background: #0b6334; display: flex; align-items: center; justify-content: center; }
.vpage { margin-left: 9px; } .vbreak { margin-left: 17px; } .zoom { margin-left: 12px; } .zp { margin-left: 10px; }

.taskbar { height: 40px; flex: none; display: flex; align-items: center; background: linear-gradient(90deg, #203744, #20343f 60%, #1c2e45 75%, #192245); color: #fff; padding-top: 2px; }
.win { margin: -1px 16px 0 16px; }
.search { width: 287px; height: 38px; background: #f2f2f2; display: flex; align-items: center; color: #333; font-size: 14.500px; margin-top: -2px; padding-top: 2px; }
.mag { margin: -2px 11px 0 11px; }
.food { margin-left: 39px; margin-top: -1px; }
.edge { margin-left: 15px; } .folder { margin-left: 26px; } .chrome { margin-left: 26px; }
.gapp, .sapp, .xapp { height: 40px; margin-top: -2px; display: flex; align-items: center; justify-content: center; border-bottom: 3px solid #76b2e4; padding-top: 4px; }
.gapp { width: 41px; margin-left: 17px; }
.gapp b { width: 24px; height: 25px; border-radius: 4px; color: #111; font: bold 18px/22px "Noto Sans", sans-serif; text-align: center; background: linear-gradient(#ffe22c, #ffe22c) 6px 19px / 12px 3px no-repeat #fff; }
.xapp { width: 49px; margin-left: 5px; background: #4d616b; }
.sapp { width: 41px; margin-left: 4px; border-image: linear-gradient(90deg, #76b2e4 32px, #3f6c90 32px) 1; border-width: 0 0 3px; border-style: solid; }
.sun { margin-left: 176px; margin-top: -1px; }
.tt { font-size: 14px; } .temp { margin-left: 7px; } .wx { margin-left: 8px; }
.tray { margin-left: 23px; margin-top: -2px; }
.ts { font-size: 12px; } .eng { margin-left: 12px; margin-top: -2px; }
.clock { width: 60px; margin-left: 10px; display: flex; flex-direction: column; align-items: center; font-size: 12px; line-height: 18px; }
.note { margin-left: 17px; margin-top: -1px; }
.edgeline { width: 1px; height: 40px; background: #66708a; margin-left: 21px; margin-top: -2px; }
```
